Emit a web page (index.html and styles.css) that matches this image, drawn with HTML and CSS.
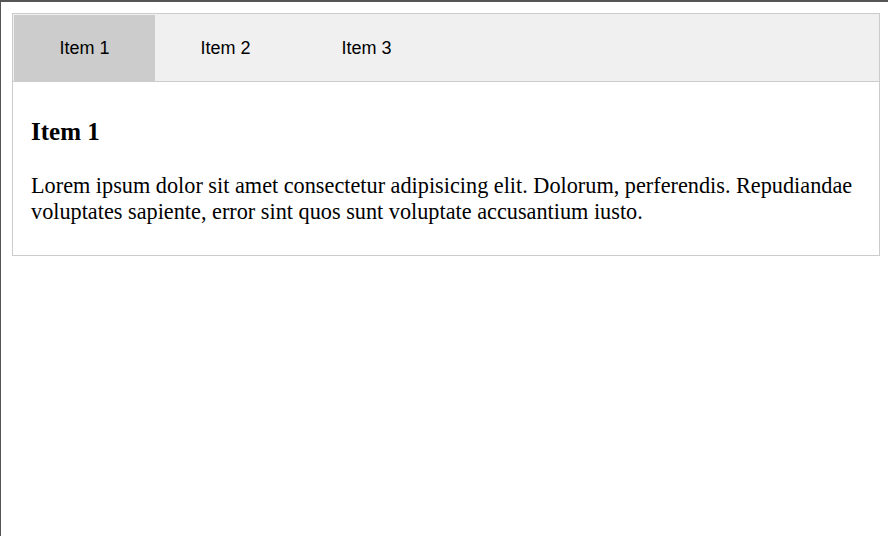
FILE: index.html
```html
<!DOCTYPE html>
<html lang="en">
<head>
<meta charset="utf-8">
<title>Tabs</title>
<link rel="stylesheet" href="styles.css">
</head>
<body>
<div class="tabs">
  <nav class="tab-bar">
    <div class="tab active">Item 1</div>
    <div class="tab">Item 2</div>
    <div class="tab">Item 3</div>
  </nav>
  <section class="panel">
    <h3 class="panel-title">Item 1</h3>
    <p class="panel-text">Lorem ipsum dolor sit amet consectetur adipisicing elit. Dolorum, perferendis. Repudiandae voluptates sapiente, error sint quos sunt voluptate accusantium iusto.</p>
  </section>
</div>
</body>
</html>
```
FILE: styles.css
```css
html {
  height: 100%;
  box-sizing: border-box;
  border-top: 2px solid #555;
  border-left: 1px solid #555;
  background: #fff;
}
body {
  margin: 11px 8px 0 11px;
  font-family: "Liberation Serif", "Times New Roman", serif;
  color: #000;
}
.tabs {
  border: 1px solid #ccc;
}
.tab-bar {
  display: flex;
  background: #f0f0f0;
  padding: 1px 1px 0;
  border-bottom: 1px solid #ccc;
}
.tab {
  width: 141px;
  height: 66px;
  display: flex;
  align-items: center;
  justify-content: center;
  font-family: "Liberation Sans", Arial, sans-serif;
  font-size: 18px;
}
.tab.active {
  background: #ccc;
}
.panel {
  padding: 18px 18px 18px;
}
.panel-title {
  font-size: 25px;
  font-weight: bold;
  margin: 18px 0 27px;
}
.panel-text {
  font-size: 22.25px;
  margin: 0 0 12px;
}
```
